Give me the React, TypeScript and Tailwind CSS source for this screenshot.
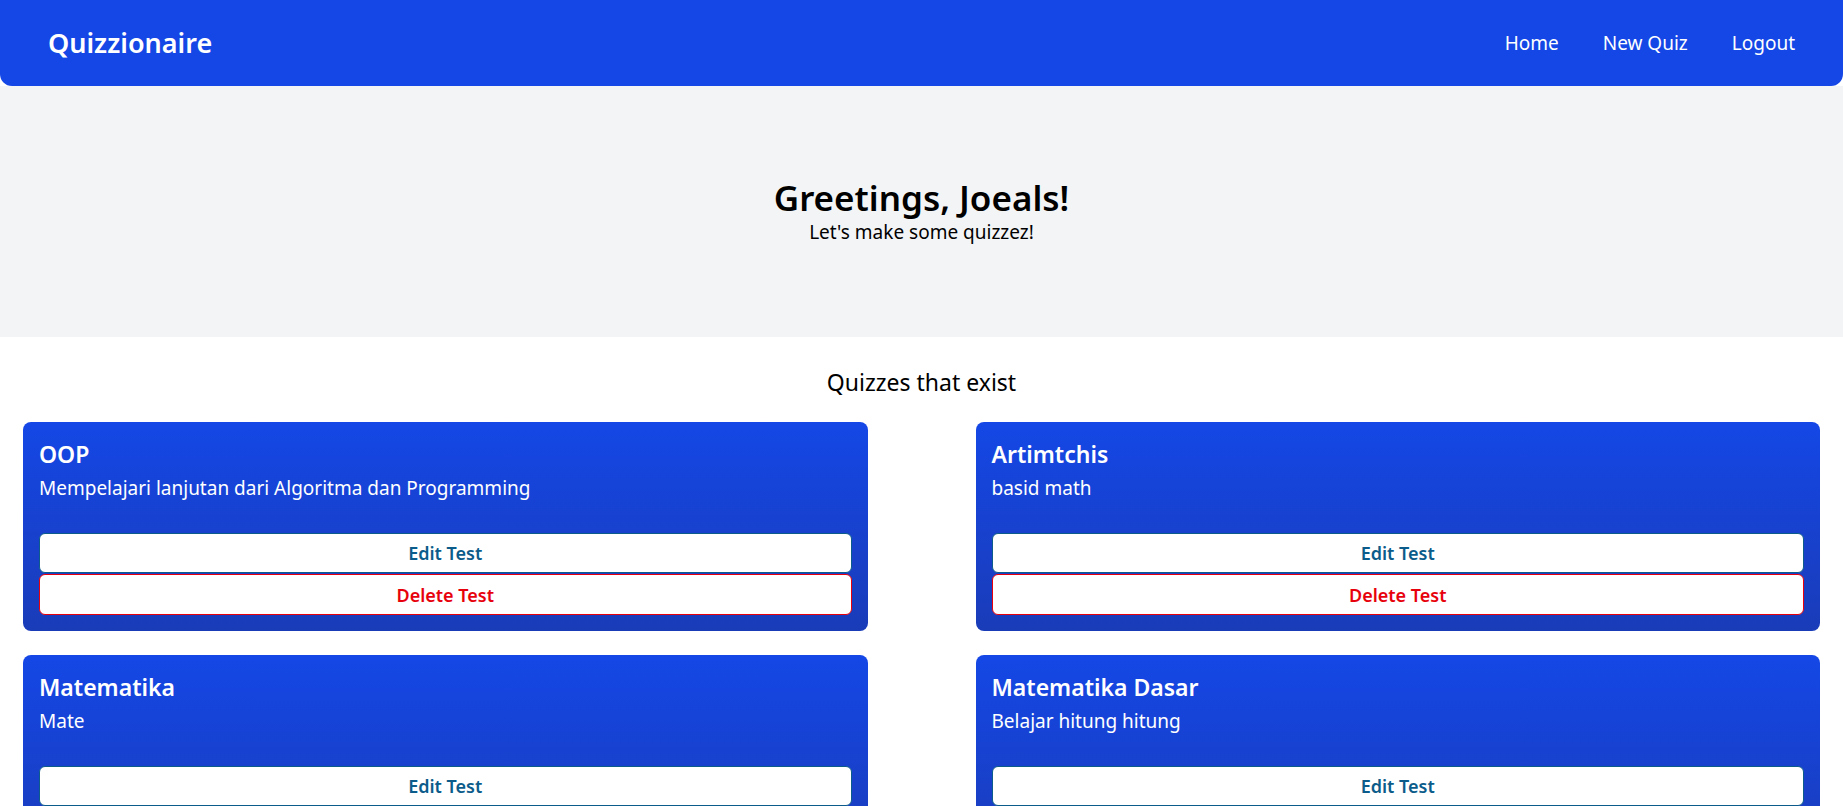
import React from 'react';

interface Quiz {
  id: number;
  title: string;
  description: string;
}

const quizzes: Quiz[] = [
  { id: 1, title: 'OOP', description: 'Mempelajari lanjutan dari Algoritma dan Programming' },
  { id: 2, title: 'Artimtchis', description: 'basid math' },
  { id: 3, title: 'Matematika', description: 'Mate' },
  { id: 4, title: 'Matematika Dasar', description: 'Belajar hitung hitung' },
];

const QuizCard: React.FC<{ quiz: Quiz }> = ({ quiz }) => (
  <div className="rounded-lg bg-gradient-to-b from-blue-700 to-blue-800 p-4 text-white">
    <h3 className="text-[23px] font-semibold leading-8">{quiz.title}</h3>
    <p className="text-[19px] leading-7 mt-1">{quiz.description}</p>
    <div className="mt-[31px] flex flex-col gap-px">
      <button className="h-10 w-full rounded-md border border-[#0b5c8a] bg-white text-lg font-semibold text-[#0b5c8a]">
        Edit Test
      </button>
      <button className="h-[41px] w-full rounded-md border border-red-600 bg-white text-lg font-semibold text-red-600">
        Delete Test
      </button>
    </div>
  </div>
);

export default function App() {
  return (
    <div className="min-h-screen bg-white text-black" style={{ fontFamily: '"Noto Sans", "Open Sans", sans-serif' }}>
      {/* Navbar */}
      <nav className="h-[86px] rounded-b-xl bg-blue-700 px-12 flex items-center justify-between text-white">
        <a href="#" className="text-[27px] font-semibold">Quizzionaire</a>
        <div className="flex items-center gap-[44px] text-[19px]">
          <a href="#">Home</a>
          <a href="#">New Quiz</a>
          <a href="#">Logout</a>
        </div>
      </nav>

      {/* Hero */}
      <section className="h-[251px] bg-gray-100 flex flex-col items-center justify-center">
        <h1 className="text-[35px] font-semibold leading-10">Greetings, Joeals!</h1>
        <p className="text-[19px] leading-7">Let's make some quizzez!</p>
      </section>

      {/* Quiz list */}
      <section className="px-[23px] pt-[29px] pb-10">
        <h2 className="text-center text-[23px] leading-8 mb-6">Quizzes that exist</h2>
        <div className="grid grid-cols-2 gap-x-[108px] gap-y-6">
          {quizzes.map(q => <QuizCard key={q.id} quiz={q} />)}
        </div>
      </section>
    </div>
  );
}
